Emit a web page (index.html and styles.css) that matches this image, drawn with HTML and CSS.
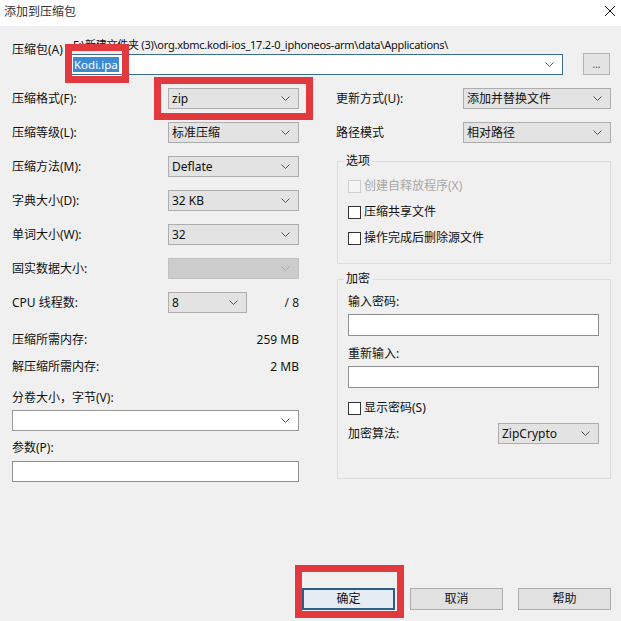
FILE: index.html
```html
<!DOCTYPE html>
<html lang="zh-CN">
<head>
<meta charset="utf-8">
<title>添加到压缩包</title>
<link rel="stylesheet" href="styles.css">
</head>
<body>
<div class="titlebar">
  <span class="title">添加到压缩包</span>
  <svg class="close" width="12" height="12" viewBox="0 0 12 12"><path d="M1 1 L11 11 M11 1 L1 11" stroke="#111" stroke-width="1" fill="none"/></svg>
</div>
<div class="main">
  <div class="archive">
    <div class="archive-label">压缩包(A)</div>
    <div class="archive-right">
      <div class="path">F:\新建文件夹 (3)\org.xbmc.kodi-ios_17.2-0_iphoneos-arm\data\Applications\</div>
      <div class="archive-row">
        <div class="combo focus"><span class="sel-text">Kodi.ipa</span><svg class="chev" width="9" height="5" viewBox="0 0 9 5"><path d="M0.5 0.5 L4.5 4.5 L8.5 0.5" stroke="#555" fill="none"/></svg></div>
        <div class="browse">...</div>
      </div>
    </div>
  </div>

  <div class="columns">
    <div class="left">
      <div class="rows">
        <div class="row"><span>压缩格式(F):</span><div class="select w131"><span>zip</span><svg class="chev" width="9" height="5" viewBox="0 0 9 5"><path d="M0.5 0.5 L4.5 4.5 L8.5 0.5" stroke="#555" fill="none"/></svg></div></div>
        <div class="row"><span>压缩等级(L):</span><div class="select w131"><span>标准压缩</span><svg class="chev" width="9" height="5" viewBox="0 0 9 5"><path d="M0.5 0.5 L4.5 4.5 L8.5 0.5" stroke="#555" fill="none"/></svg></div></div>
        <div class="row"><span>压缩方法(M):</span><div class="select w131"><span>Deflate</span><svg class="chev" width="9" height="5" viewBox="0 0 9 5"><path d="M0.5 0.5 L4.5 4.5 L8.5 0.5" stroke="#555" fill="none"/></svg></div></div>
        <div class="row"><span>字典大小(D):</span><div class="select w131"><span>32 KB</span><svg class="chev" width="9" height="5" viewBox="0 0 9 5"><path d="M0.5 0.5 L4.5 4.5 L8.5 0.5" stroke="#555" fill="none"/></svg></div></div>
        <div class="row"><span>单词大小(W):</span><div class="select w131"><span>32</span><svg class="chev" width="9" height="5" viewBox="0 0 9 5"><path d="M0.5 0.5 L4.5 4.5 L8.5 0.5" stroke="#555" fill="none"/></svg></div></div>
        <div class="row"><span>固实数据大小:</span><div class="select w131 disabled"><span></span><svg class="chev" width="9" height="5" viewBox="0 0 9 5"><path d="M0.5 0.5 L4.5 4.5 L8.5 0.5" stroke="#aaa" fill="none"/></svg></div></div>
        <div class="row"><span>CPU 线程数:</span><div class="cpu"><div class="select w79"><span>8</span><svg class="chev" width="9" height="5" viewBox="0 0 9 5"><path d="M0.5 0.5 L4.5 4.5 L8.5 0.5" stroke="#555" fill="none"/></svg></div><span class="of">/ 8</span></div></div>
      </div>
      <div class="mem first"><span>压缩所需内存:</span><span>259 MB</span></div>
      <div class="mem second"><span>解压缩所需内存:</span><span>2 MB</span></div>
      <div class="lbl split">分卷大小，字节(V):</div>
      <div class="combo wide"><span></span><svg class="chev" width="9" height="5" viewBox="0 0 9 5"><path d="M0.5 0.5 L4.5 4.5 L8.5 0.5" stroke="#555" fill="none"/></svg></div>
      <div class="lbl params">参数(P):</div>
      <div class="input params-input"></div>
    </div>

    <div class="right">
      <div class="rows">
        <div class="row"><span>更新方式(U):</span><div class="select w148"><span>添加并替换文件</span><svg class="chev" width="9" height="5" viewBox="0 0 9 5"><path d="M0.5 0.5 L4.5 4.5 L8.5 0.5" stroke="#555" fill="none"/></svg></div></div>
        <div class="row"><span>路径模式</span><div class="select w148"><span>相对路径</span><svg class="chev" width="9" height="5" viewBox="0 0 9 5"><path d="M0.5 0.5 L4.5 4.5 L8.5 0.5" stroke="#555" fill="none"/></svg></div></div>
      </div>
      <fieldset class="group options">
        <legend>选项</legend>
        <div class="check disabled"><span class="box"></span>创建自释放程序(X)</div>
        <div class="check"><span class="box"></span>压缩共享文件</div>
        <div class="check"><span class="box"></span>操作完成后删除源文件</div>
      </fieldset>
      <fieldset class="group crypt">
        <legend>加密</legend>
        <div class="lbl">输入密码:</div>
        <div class="input pw"></div>
        <div class="lbl re">重新输入:</div>
        <div class="input pw"></div>
        <div class="check show"><span class="box"></span>显示密码(S)</div>
        <div class="row algo"><span>加密算法:</span><div class="select w101"><span>ZipCrypto</span><svg class="chev" width="9" height="5" viewBox="0 0 9 5"><path d="M0.5 0.5 L4.5 4.5 L8.5 0.5" stroke="#555" fill="none"/></svg></div></div>
      </fieldset>
    </div>
  </div>

  <div class="footer">
    <div class="btn default">确定</div>
    <div class="btn">取消</div>
    <div class="btn">帮助</div>
  </div>
</div>

<div class="mark mark-name"></div>
<div class="mark mark-format"></div>
<div class="mark mark-ok"></div>
</body>
</html>
```
FILE: styles.css
```css
* { box-sizing: border-box; }
html, body { margin: 0; padding: 0; }
body {
  width: 621px;
  height: 621px;
  overflow: hidden;
  position: relative;
  background: #f0f0f0;
  color: #111;
  font-family: "Noto Sans", "Noto Sans CJK SC", sans-serif;
  font-size: 12px;
  line-height: 16px;
}
.titlebar {
  height: 26px;
  background: #fff;
  display: flex;
  justify-content: space-between;
  align-items: flex-start;
  padding: 4px 5px 0 4px;
}
.title { font-size: 12px; color: #333; }
.close { margin-top: 1px; }

.main { padding: 0 10px 0 12px; }

.archive { display: flex; margin-top: 11px; }
.archive-label { width: 58px; margin-top: 5px; }
.archive-right { flex: 1; }
.path { font-size: 11px; letter-spacing: -0.25px; padding-left: 3px; white-space: nowrap; }
.archive-row { display: flex; align-items: center; }

.combo {
  height: 21px;
  background: #fff;
  border: 1px solid #9a9a9a;
  display: flex;
  align-items: center;
  justify-content: space-between;
  padding: 0 8px 0 2px;
}
.combo.focus { width: 493px; border-color: #3a6e8c; }
.sel-text { background: #3d8ad4; color: #fff; padding: 0 1px; line-height: 15px; font-size: 11.5px; }
.browse {
  margin-left: 20px;
  width: 27px;
  height: 22px;
  background: #e3e3e3;
  border: 1px solid #b4b4b4;
  display: flex;
  align-items: center;
  justify-content: center;
  font-size: 10px;
  color: #444;
}

.columns { display: flex; margin-top: 13px; }
.left { width: 287px; }
.right { width: 275px; margin-left: 37px; }

.rows { display: flex; flex-direction: column; gap: 13px; }
.row { display: flex; align-items: center; justify-content: space-between; height: 21px; }

.select {
  height: 21px;
  background: #e3e3e3;
  border: 1px solid #adadad;
  display: flex;
  align-items: center;
  justify-content: space-between;
  padding: 0 8px 0 3px;
}
.select.disabled { background: #cccccc; border-color: #c2c2c2; }
.w131 { width: 131px; }
.w148 { width: 148px; }
.w79 { width: 79px; }
.w101 { width: 101px; }

.cpu { width: 131px; display: flex; align-items: center; justify-content: space-between; }
.of { color: #222; }

.mem { display: flex; justify-content: space-between; }
.mem.first { margin-top: 19px; }
.mem.second { margin-top: 11px; }
.lbl.split { margin-top: 15px; }
.combo.wide { width: 287px; margin-top: 4px; }
.lbl.params { margin-top: 9px; }
.input { height: 21px; background: #fff; border: 1px solid #8f8f8f; }
.params-input { margin-top: 5px; width: 287px; }

.group {
  margin: 10px 0 0 1px;
  border: 1px solid #dcdcdc;
  padding: 9px 11px 17px 10px;
}
.group legend { padding: 0 2px; margin-left: -4px; line-height: 16px; }
.options { display: flex; flex-direction: column; gap: 10px; }
.options .check { margin: 0; }
.check { display: flex; align-items: center; height: 16px; }
.box {
  width: 13px; height: 13px;
  border: 1px solid #333;
  background: #fff;
  margin-right: 3px;
}
.check.disabled { color: #a8a8a8; }
.check.disabled .box { border-color: #cfcfcf; background: #f4f4f4; }

.crypt { margin-top: 7px; padding: 7px 11px 34px 10px; }
.pw { margin-top: 4px; height: 22px; }
.lbl.re { margin-top: 10px; }
.check.show { margin-top: 12px; }
.algo { margin-top: 7px; }

.footer { display: flex; justify-content: flex-end; gap: 15px; margin-top: 106px; }
.btn {
  width: 93px;
  height: 22px;
  background: #e1e1e1;
  border: 1px solid #adadad;
  display: flex;
  align-items: center;
  justify-content: center;
}
.btn.default { background: #e4ebf2; border: 2px solid #2f5d84; }

.mark { position: absolute; border: 7px solid #e1393d; }
.mark-name { left: 65px; top: 44px; width: 64px; height: 39px; }
.mark-format { left: 154px; top: 77px; width: 159px; height: 43px; }
.mark-ok { left: 295px; top: 565px; width: 109px; height: 53px; }
```
